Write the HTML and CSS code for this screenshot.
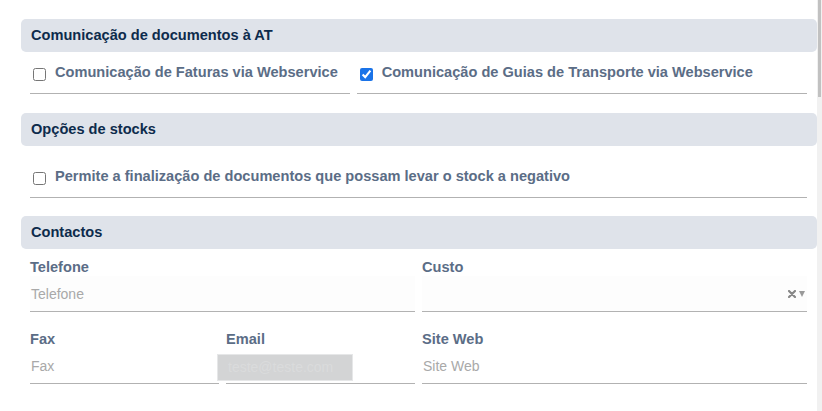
FILE: index.html
```html
<!DOCTYPE html>
<html lang="pt">
<head>
<meta charset="utf-8">
<title>Configurações</title>
<link rel="stylesheet" href="styles.css">
</head>
<body>
<div class="page">
  <main class="content">
    <section class="section">
      <div class="section-head">Comunicação de documentos à AT</div>
      <div class="grid12 sec-body">
        <div class="field check-field span5">
          <label class="check"><input type="checkbox"><span>Comunicação de Faturas via Webservice</span></label>
        </div>
        <div class="field check-field span7">
          <label class="check"><input type="checkbox" checked><span>Comunicação de Guias de Transporte via Webservice</span></label>
        </div>
      </div>
    </section>

    <section class="section section-tight">
      <div class="section-head">Opções de stocks</div>
      <div class="grid12 sec-body">
        <div class="field check-field check-tall span12">
          <label class="check"><input type="checkbox"><span>Permite a finalização de documentos que possam levar o stock a negativo</span></label>
        </div>
      </div>
    </section>

    <section class="section">
      <div class="section-head">Contactos</div>
      <div class="grid4 sec-body contacts">
        <div class="field span2">
          <div class="label">Telefone</div>
          <div class="input shaded"><span class="ph">Telefone</span></div>
        </div>
        <div class="field span2">
          <div class="label">Custo</div>
          <div class="input select shaded">
            <span class="sel-value"></span>
            <span class="sel-icons">
              <svg class="clear" width="8" height="8" viewBox="0 0 8 8" aria-hidden="true"><path d="M1 1 L7 7 M7 1 L1 7" stroke="#888888" stroke-width="2.2" stroke-linecap="round"/></svg>
              <span class="caret"></span>
            </span>
          </div>
        </div>
        <div class="field">
          <div class="label">Fax</div>
          <div class="input"><span class="ph">Fax</span></div>
        </div>
        <div class="field">
          <div class="label">Email</div>
          <div class="input email">
            <span class="autofill">teste@teste.com</span>
          </div>
        </div>
        <div class="field span2">
          <div class="label">Site Web</div>
          <div class="input"><span class="ph">Site Web</span></div>
        </div>
      </div>
    </section>
  </main>
  <div class="scrollbar"><div class="thumb"></div></div>
</div>
</body>
</html>
```

FILE: styles.css
```css
* { box-sizing: border-box; }
html, body { margin: 0; padding: 0; height: 100%; overflow: hidden; background: #ffffff; }
body { font-family: "Liberation Sans", Arial, sans-serif; font-size: 14px; color: #5b6d86; }

.page { display: flex; height: 411px; }
.content { flex: 1; padding: 19px 0 0 21px; min-width: 0; }
.scrollbar { width: 5px; background: #f1f1f1; flex: none; }
.thumb { width: 3px; margin-left: 1px; height: 97px; background: #c1c1c1; }

.section { margin-bottom: 19px; }
.section-tight { margin-bottom: 18px; }
.section-head {
  height: 33px; line-height: 33px; padding-left: 10px;
  background: #dfe3ea; border-radius: 5px;
  font-weight: bold; font-size: 14.6px; color: #0d2b4c;
}
.sec-body { padding: 0 10px 0 9px; }

.grid12 { display: grid; grid-template-columns: repeat(12, 1fr); column-gap: 7px; }
.grid4 { display: grid; grid-template-columns: repeat(4, 1fr); column-gap: 7px; row-gap: 19px; }
.span5 { grid-column: span 5; }
.span7 { grid-column: span 7; }
.span12 { grid-column: span 12; }
.span2 { grid-column: span 2; }

.check-field { padding: 12px 0 12px; border-bottom: 1px solid #b2b2b2; }
.check-tall { padding-top: 22px; }
.check { display: flex; align-items: flex-start; gap: 9px; font-weight: bold; font-size: 14.6px; line-height: 17px; color: #5b6d86; }
.check input { margin: 4px 0 0 3px; width: 13px; height: 13px; flex: none; accent-color: #1a73e8; }

.contacts { padding-top: 10px; }
.label { font-weight: bold; font-size: 14.6px; line-height: 17px; color: #5b6d86; }
.input {
  position: relative; height: 36px; display: flex; align-items: center;
  border-bottom: 1px solid #b2b2b2; padding: 1px 0 1px 1px;
}
.input.shaded { background: #fdfdfd; }
.ph { color: #a9a9a9; font-size: 14px; }
.select { justify-content: space-between; }
.sel-icons { display: flex; align-items: center; gap: 3px; margin-right: 2px; }
.caret { width: 0; height: 0; border-left: 3.5px solid transparent; border-right: 3.5px solid transparent; border-top: 6px solid #9a9a9a; }

.autofill {
  position: absolute; left: -9px; top: 6px; width: 136px; height: 27px;
  background: #d3d4d5; border: 1px solid #e6e7e8;
  color: #dadbdc; font-size: 14px; line-height: 25px; padding-left: 10px; white-space: nowrap; overflow: hidden;
}
```
